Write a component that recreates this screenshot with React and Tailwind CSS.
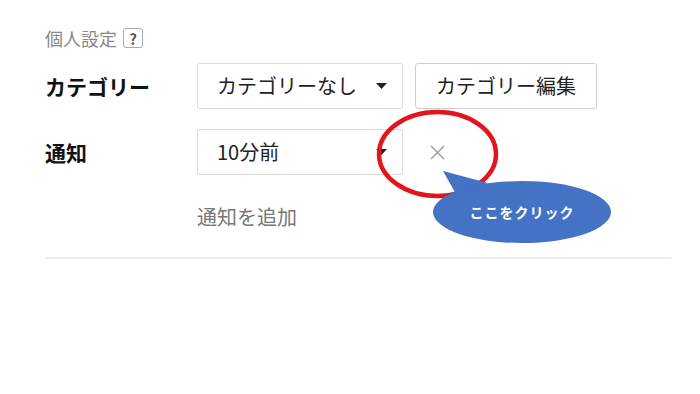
import React from 'react';

const font = { fontFamily: '"Noto Sans CJK JP", "Noto Sans", sans-serif' };

const Caret = () => (
  <svg width="11" height="6" viewBox="0 0 11 6" className="shrink-0">
    <path d="M0 0 L11 0 L5.5 6 Z" fill="#222" />
  </svg>
);

const Select = ({ value }) => (
  <div className="flex items-center justify-between w-[206px] h-[46px] border border-[#dcdcdc] rounded-[2px] bg-white pl-[19px] pr-[15px] text-[20px] text-[#222]">
    <span className="leading-none">{value}</span>
    <Caret />
  </div>
);

export default function App() {
  return (
    <div className="relative w-[700px] h-[394px] bg-white overflow-hidden" style={font}>
      <div className="pl-[45px] pr-[29px] pt-[28px]">
        {/* 見出し */}
        <div className="flex items-center h-[20px] gap-[6px]">
          <span className="text-[18px] leading-none text-[#888]">個人設定</span>
          <span className="flex shrink-0 items-center justify-center w-[20px] h-[20px] border-[1.5px] border-[#aaa] rounded-[3px] text-[15px] font-bold text-[#555] leading-none">?</span>
        </div>

        {/* カテゴリー */}
        <div className="flex items-center mt-[15px]">
          <div className="w-[152px] text-[21px] font-bold text-[#111] leading-none">カテゴリー</div>
          <Select value="カテゴリーなし" />
          <div className="ml-[12px] flex items-center justify-center w-[182px] h-[46px] border border-[#cfcfcf] rounded-[3px] text-[20px] text-[#222] leading-none">
            カテゴリー編集
          </div>
        </div>

        {/* 通知 */}
        <div className="flex items-center mt-[20px]">
          <div className="w-[152px] text-[21px] font-bold text-[#111] leading-none">通知</div>
          <Select value="10分前" />
          <div className="flex items-center justify-center w-[68px] h-[46px]">
            <svg width="15" height="15" viewBox="0 0 15 15">
              <path d="M1 1 L14 14 M14 1 L1 14" stroke="#999" strokeWidth="1.4" fill="none" />
            </svg>
          </div>
        </div>

        <div className="pl-[152px] mt-[32px] text-[20px] leading-none text-[#777]">通知を追加</div>

        <div className="mt-[30px] border-t-2 border-[#eeeeee]" />
      </div>

      {/* 注釈 */}
      <svg className="absolute left-0 top-0 pointer-events-none" width="700" height="394" viewBox="0 0 700 394">
        <ellipse cx="437.5" cy="154" rx="58.5" ry="42" fill="none" stroke="#e3141b" strokeWidth="4.5" />
        <ellipse cx="522" cy="212" rx="89" ry="31" fill="#4472c4" />
        <path d="M443 171 L488 183 L456 194 Z" fill="#4472c4" />
      </svg>
      <div className="absolute left-[433px] top-[181px] w-[178px] h-[62px] flex items-center justify-center text-white text-[14px] font-bold tracking-[1px] leading-none pointer-events-none">
        ここをクリック
      </div>
    </div>
  );
}
